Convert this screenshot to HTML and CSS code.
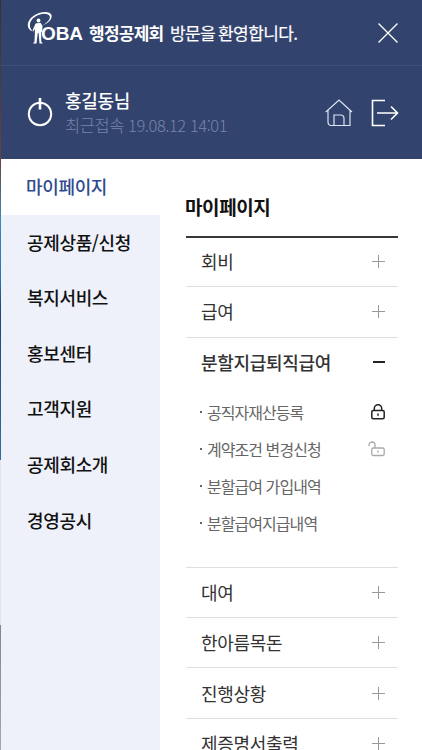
FILE: index.html
```html
<!DOCTYPE html>
<html lang="ko">

<head>
    <meta charset="utf-8">
    <meta name="viewport" content="width=device-width, initial-scale=1">
    <title>POBA 행정공제회</title>
    <link rel="stylesheet" href="styles.css">
</head>

<body>
    <div class="edge"></div>
    <div class="menu">
        <header class="top">
            <svg class="figure" width="28" height="34" viewBox="0 0 28 34">
                <path d="M6 20.500C-2 18 0 9 7 4.500 14 0 23 0 24.500 4c1 4-3 8.500-9.500 10.500 5-2.500 8.500-6.500 7.800-9C21.500 1.500 14 2 8.500 5.500 2 9.500 1 16 6 20.500z" fill="#fff" />
                <circle cx="11.500" cy="9.500" r="1.900" fill="#fff" />
                <path d="M8.500 12.500l5-.8 2 3-.4 6-1 .5.2 9.500 1.500 1.800h-3.300l-.9-10.500-.8.100-1.300 10.400H6l1.500-2 .5-12.500-1.700 2.500-.6-1.500z" fill="#fff" />
            </svg>
            <strong class="logo">OBA</strong>
            <strong class="brand">행정공제회</strong>
            <span class="welcome">방문을 환영합니다.</span>
            <svg class="close" width="20" height="20" viewBox="0 0 20 20">
                <path d="M.5.5l19 19M19.5.5l-19 19" />
            </svg>
        </header>

        <section class="user">
            <svg class="power" width="26" height="30" viewBox="0 0 26 30">
                <circle cx="13" cy="17" r="11.2" />
                <path d="M13 1v11.5" />
            </svg>
            <div class="info">
                <p class="name">홍길동님</p>
                <p class="last">최근접속 19.08.12 14:01</p>
            </div>
            <svg class="home" width="28" height="28" viewBox="0 0 28 28">
                <path d="M.8 13L14 1l13 12M3 11.5V23q0 3.5 3.5 3.5H25v-15M9 26V16h6.500q3.500 0 3.500 3.500V26" />
            </svg>
            <svg class="logout" width="28" height="28" viewBox="0 0 28 28">
                <path d="M14 1.500H1.500V26.500H14M6 14h20M20 7.500l6.500 6.500-6.500 6.500" />
            </svg>
        </section>

        <div class="body">
            <nav class="side">
                <a class="on">마이페이지</a>
                <a>공제상품/신청</a>
                <a>복지서비스</a>
                <a>홍보센터</a>
                <a>고객지원</a>
                <a>공제회소개</a>
                <a>경영공시</a>
            </nav>

            <main class="content">
                <h2>마이페이지</h2>
                <ul class="list">
                    <li><div class="row">회비<i class="plus"></i></div></li>
                    <li><div class="row">급여<i class="plus"></i></div></li>
                    <li>
                        <div class="row open">분할지급퇴직급여<i class="minus"></i></div>
                        <ul class="sub">
                            <li>공직자재산등록
                                <svg class="lock" width="14" height="16" viewBox="0 0 14 16">
                                    <rect x=".8" y="6.500" width="12.400" height="8.200" rx="1.500" />
                                    <path d="M3.300 6.500V4.500a3.700 3.700 0 0 1 7.400 0v2M7 9.500v2.300" />
                                </svg>
                            </li>
                            <li>계약조건 변경신청
                                <svg class="lock unlock" width="17" height="16" viewBox="0 0 17 16">
                                    <rect x="3.800" y="7" width="12.400" height="7.500" rx="1.500" />
                                    <path d="M1 5V4a3 3 0 0 1 6 0v3M10 9.500v2.300" />
                                </svg>
                            </li>
                            <li>분할급여 가입내역</li>
                            <li>분할급여지급내역</li>
                        </ul>
                    </li>
                    <li><div class="row">대여<i class="plus"></i></div></li>
                    <li><div class="row">한아름목돈<i class="plus"></i></div></li>
                    <li><div class="row">진행상황<i class="plus"></i></div></li>
                    <li><div class="row">제증명서출력<i class="plus"></i></div></li>
                </ul>
            </main>
        </div>
    </div>
</body>

</html>
```

FILE: styles.css
```css
* {
    box-sizing: border-box;
}

body {
    display: flex;
    margin: 0;
    height: 750px;
    overflow: hidden;
    font-family: "Noto Sans CJK KR", sans-serif;
    background: #fff;
}

p,
h2,
ul {
    margin: 0;
    padding: 0;
    list-style: none;
}

svg {
    flex: none;
    fill: none;
    stroke: #fff;
}

/* page left showing beside the open menu */
.edge {
    flex: none;
    width: 1px;
    background: linear-gradient(#343238 0, #65443f 160px, #3c89b4 220px, #2878a8 280px, #204576 310px, #30709b 460px, #e5e5e8 460px, #e5e5e8 625px, #858585 625px, #a6a6aa 750px);
}

.menu {
    flex: 1;
    height: 750px;
    overflow: hidden;
}

.top {
    display: flex;
    align-items: center;
    height: 66px;
    padding: 0 24px 0 26px;
    border-bottom: 1px solid #3d4f7b;
    background: #32436d;
    color: #fff;
    white-space: nowrap;
}

.figure {
    margin-top: -10px;
    stroke: none;
}

.logo {
    width: 48px;
    margin: 2px 0 0 -14px;
    font: bold 19px/30px "Liberation Sans", sans-serif;
    letter-spacing: -0.1px;
}

.brand {
    width: 81px;
    font-size: 17px;
    letter-spacing: -0.75px;
}

.welcome {
    font-size: 17px;
    letter-spacing: -0.6px;
    word-spacing: -1.2px;
    -webkit-text-stroke: 0.2px;
}

.close {
    margin-left: auto;
    stroke-width: 1.3;
}

.user {
    display: flex;
    align-items: center;
    height: 93px;
    padding: 0 23px 0 26px;
    background: #32436d;
    color: #fff;
}

.power {
    margin-top: -2px;
    stroke-width: 2;
}

.power path {
    stroke-width: 2.6;
}

.info {
    margin-left: 12px;
    white-space: nowrap;
}

.name {
    font-size: 18px;
    font-weight: 500;
    line-height: 26px;
    letter-spacing: -0.3px;
}

.last {
    font-size: 16.5px;
    font-weight: 300;
    line-height: 25px;
    letter-spacing: -0.45px;
    color: #7685a9;
}

.home {
    margin-left: auto;
    stroke: #dce3f4;
    stroke-width: 1.2;
}

.logout {
    margin-left: 18px;
    stroke-width: 1.6;
}

.body {
    display: flex;
    height: 591px;
}

.side {
    flex: none;
    width: 159px;
    background: #eef1fa;
}

.side a {
    display: block;
    height: 55.6px;
    padding-left: 26px;
    font-size: 18px;
    font-weight: 500;
    line-height: 55px;
    letter-spacing: -0.35px;
    color: #111;
}

.side .on {
    background: #fff;
    color: #2f4b8e;
    padding-left: 25px;
}

.content {
    flex: 1;
    padding: 32px 24px 0 26px;
}

h2 {
    height: 47px;
    border-bottom: 2px solid #37373a;
    margin-bottom: -1px;
    font-size: 19px;
    line-height: 32px;
    letter-spacing: -0.4px;
    text-indent: -1px;
    color: #111;
}

.list > li {
    border-bottom: 1px solid #dfdfdf;
}

.row {
    display: flex;
    align-items: center;
    justify-content: space-between;
    height: 49.3px;
    padding: 0 13px 1px 15px;
    font-size: 18px;
    letter-spacing: -0.3px;
    color: #333;
}

.open {
    font-weight: 500;
}

.plus,
.minus {
    width: 13px;
    height: 13px;
    margin-top: 1px;
    background: linear-gradient(#999, #999) center / 13px 1px no-repeat, linear-gradient(#999, #999) center / 1px 13px no-repeat;
}

.minus {
    height: 12px;
    background: linear-gradient(#222, #222) center / 12px 2px no-repeat;
}

.sub {
    padding: 7px 13px 25px 14px;
}

.sub li {
    display: flex;
    align-items: center;
    height: 37px;
    font-size: 16px;
    letter-spacing: -0.95px;
    color: #666;
}

.sub li::before {
    content: "";
    width: 2px;
    height: 2px;
    margin-right: 5px;
    background: #666;
}

.lock {
    margin-left: auto;
    stroke: #222;
    stroke-width: 1.5;
}

.unlock {
    stroke: #aaa;
    stroke-width: 1.3;
}
```
